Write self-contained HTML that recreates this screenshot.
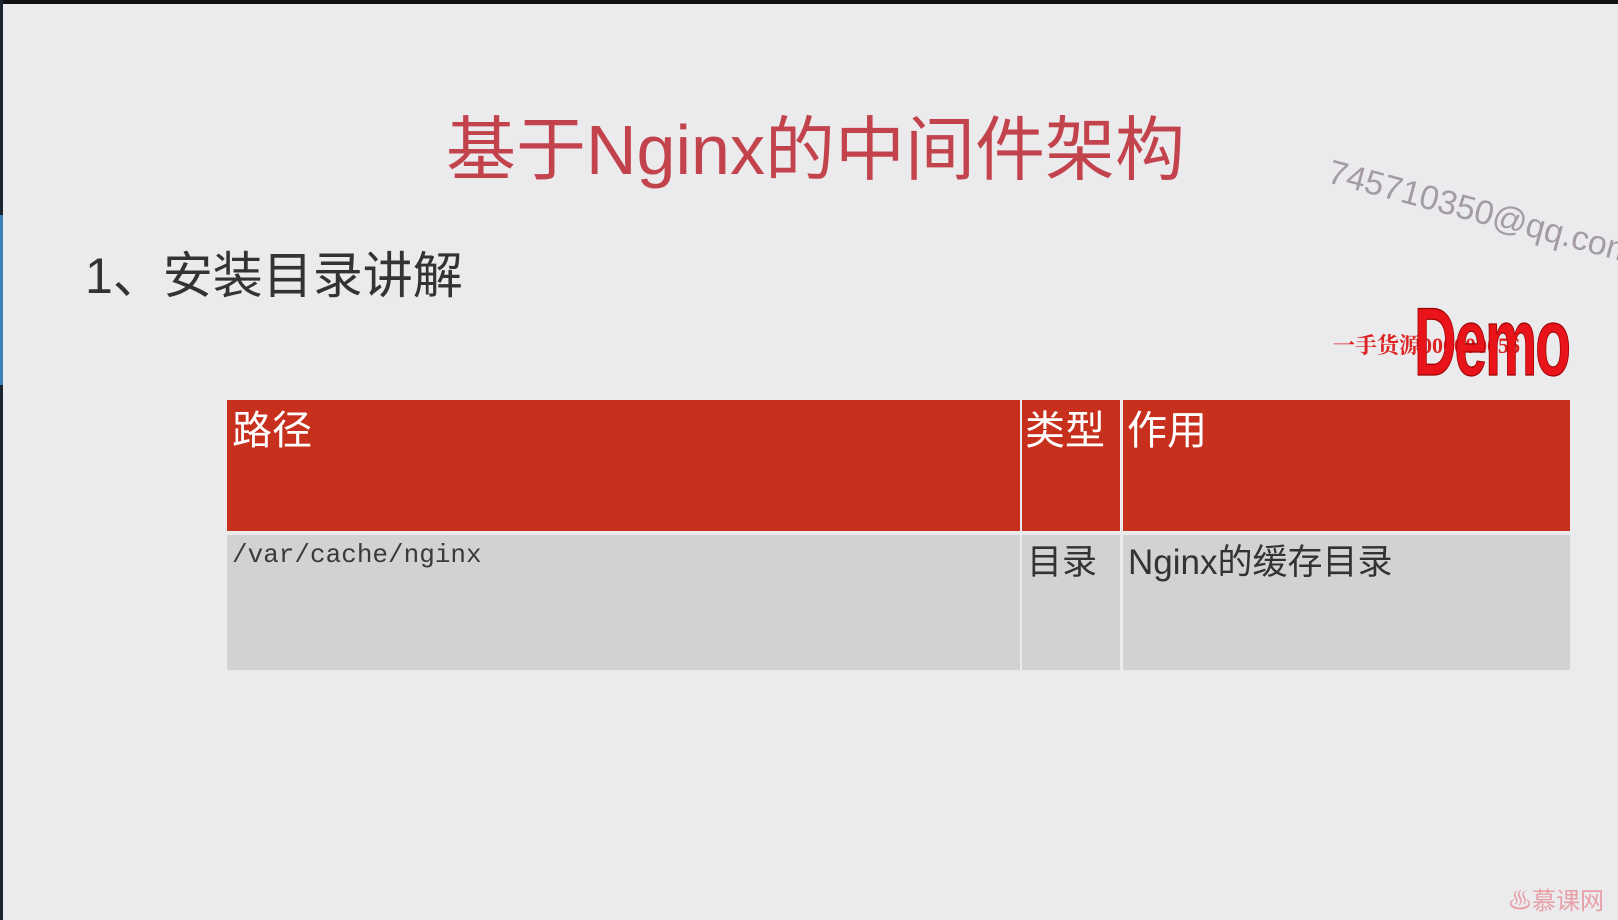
<!DOCTYPE html>
<html><head><meta charset="utf-8"><style>
*{margin:0;padding:0;box-sizing:border-box}
body{width:1618px;height:920px;background:#ebebed;position:relative;overflow:hidden;font-family:"Liberation Sans","Noto Sans CJK SC",sans-serif}
.abs{position:absolute;white-space:nowrap}
</style></head><body>
<div class="abs" style="left:0;top:0;width:1618px;height:4px;background:#111"></div>
<div class="abs" style="left:0;top:0;width:3px;height:920px;background:#1a2430"></div>
<div class="abs" style="left:0;top:215px;width:3px;height:170px;background:#3a7fb8"></div>
<div class="abs" style="left:446px;top:110px;font-size:70px;color:#c3434d;line-height:80px">基于Nginx的中间件架构</div>
<div class="abs" style="left:85px;top:246px;font-size:50px;color:#333;line-height:60px">1、安装目录讲解</div>
<div class="abs" style="left:1334px;top:152px;font-size:34px;color:#a49ca4;transform:rotate(15deg);transform-origin:0 0;line-height:40px">745710350@qq.com</div>
<div class="abs" style="left:1333px;top:332px;font-size:22px;color:#d22;font-family:'Liberation Serif','Noto Serif CJK SC',serif;font-weight:bold;line-height:28px">一手货源0000000<span style="position:relative;left:0">56</span></div>
<div class="abs" style="left:1414px;top:300px;font-size:84px;color:#e8141a;font-weight:bold;transform:scale(0.7,1.15);transform-origin:0 0;line-height:72px;letter-spacing:-3px;-webkit-text-stroke:1px #900">Demo</div>
<div class="abs" style="left:227px;top:400px;width:793px;height:131px;background:#c8301e"></div>
<div class="abs" style="left:1022px;top:400px;width:98px;height:131px;background:#c8301e"></div>
<div class="abs" style="left:1123px;top:400px;width:447px;height:131px;background:#c8301e"></div>
<div class="abs" style="left:227px;top:535px;width:793px;height:135px;background:#d2d1d4"></div>
<div class="abs" style="left:1022px;top:535px;width:98px;height:135px;background:#d2d1d4"></div>
<div class="abs" style="left:1123px;top:535px;width:447px;height:135px;background:#d2d1d4"></div>
<div class="abs" style="left:232px;top:406px;font-size:40px;color:#fff;line-height:50px">路径</div>
<div class="abs" style="left:1025px;top:406px;font-size:40px;color:#fff;line-height:50px">类型</div>
<div class="abs" style="left:1127px;top:406px;font-size:40px;color:#fff;line-height:50px">作用</div>
<div class="abs" style="left:232px;top:540px;font-size:26px;color:#3a3a3a;font-family:'Liberation Mono',monospace;line-height:30px">/var/cache/nginx</div>
<div class="abs" style="left:1027px;top:542px;font-size:35px;color:#333;line-height:42px">目录</div>
<div class="abs" style="left:1128px;top:542px;font-size:35px;color:#333;line-height:42px">Nginx的缓存目录</div>
<div class="abs" style="left:1508px;top:888px;font-size:24px;color:#e8a0a8;line-height:28px">♨慕课网</div>
</body></html>
